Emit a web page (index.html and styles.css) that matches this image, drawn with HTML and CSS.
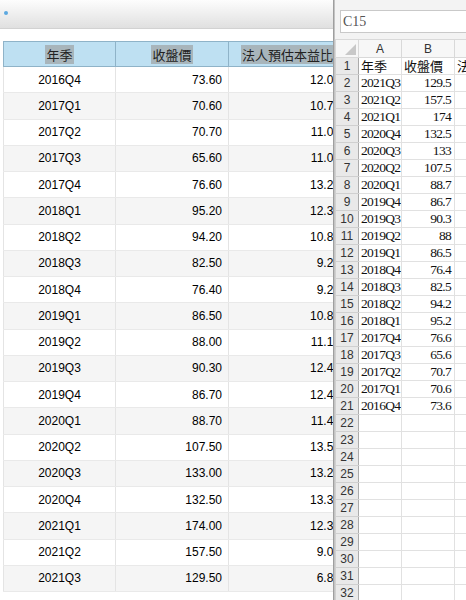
FILE: index.html
```html
<!DOCTYPE html>
<html>
<head>
<meta charset="utf-8">
<link rel="stylesheet" href="styles.css">
<title>年季 收盤價</title>
</head>
<body>
<div class="screen">
    <div class="webPane">
        <div class="topBar"><span class="dot"></span></div>
        <table class="quarterTable">
            <tr>
                <th class="colSeason"><span class="pick">年季</span></th>
                <th class="colPrice"><span class="pick">收盤價</span></th>
                <th class="colPe"><span class="pick">法人預估本益比</span></th>
            </tr>
            <tr><td>2016Q4</td><td class="num">73.60</td><td class="num">12.06</td></tr>
            <tr><td>2017Q1</td><td class="num">70.60</td><td class="num">10.71</td></tr>
            <tr><td>2017Q2</td><td class="num">70.70</td><td class="num">11.02</td></tr>
            <tr><td>2017Q3</td><td class="num">65.60</td><td class="num">11.04</td></tr>
            <tr><td>2017Q4</td><td class="num">76.60</td><td class="num">13.21</td></tr>
            <tr><td>2018Q1</td><td class="num">95.20</td><td class="num">12.33</td></tr>
            <tr><td>2018Q2</td><td class="num">94.20</td><td class="num">10.85</td></tr>
            <tr><td>2018Q3</td><td class="num">82.50</td><td class="num">9.27</td></tr>
            <tr><td>2018Q4</td><td class="num">76.40</td><td class="num">9.21</td></tr>
            <tr><td>2019Q1</td><td class="num">86.50</td><td class="num">10.88</td></tr>
            <tr><td>2019Q2</td><td class="num">88.00</td><td class="num">11.13</td></tr>
            <tr><td>2019Q3</td><td class="num">90.30</td><td class="num">12.45</td></tr>
            <tr><td>2019Q4</td><td class="num">86.70</td><td class="num">12.42</td></tr>
            <tr><td>2020Q1</td><td class="num">88.70</td><td class="num">11.46</td></tr>
            <tr><td>2020Q2</td><td class="num">107.50</td><td class="num">13.52</td></tr>
            <tr><td>2020Q3</td><td class="num">133.00</td><td class="num">13.28</td></tr>
            <tr><td>2020Q4</td><td class="num">132.50</td><td class="num">13.37</td></tr>
            <tr><td>2021Q1</td><td class="num">174.00</td><td class="num">12.36</td></tr>
            <tr><td>2021Q2</td><td class="num">157.50</td><td class="num">9.04</td></tr>
            <tr><td>2021Q3</td><td class="num">129.50</td><td class="num">6.85</td></tr>
        </table>
    </div>
    <div class="divider"></div>
    <div class="sheetPane">
        <div class="formulaBar"><div class="nameBox">C15</div></div>
        <table class="sheet">
            <tr class="colHeads">
                <td class="corner"><span class="cornerMark"></span></td>
                <td class="colA">A</td>
                <td class="colB">B</td>
                <td class="colC"></td>
            </tr>
            <tr><td class="rowHead">1</td><td class="cjk">年季</td><td class="cjk">收盤價</td><td class="cjk">法</td></tr>
            <tr><td class="rowHead">2</td><td>2021Q3</td><td class="num">129.5</td><td></td></tr>
            <tr><td class="rowHead">3</td><td>2021Q2</td><td class="num">157.5</td><td></td></tr>
            <tr><td class="rowHead">4</td><td>2021Q1</td><td class="num">174</td><td></td></tr>
            <tr><td class="rowHead">5</td><td>2020Q4</td><td class="num">132.5</td><td></td></tr>
            <tr><td class="rowHead">6</td><td>2020Q3</td><td class="num">133</td><td></td></tr>
            <tr><td class="rowHead">7</td><td>2020Q2</td><td class="num">107.5</td><td></td></tr>
            <tr><td class="rowHead">8</td><td>2020Q1</td><td class="num">88.7</td><td></td></tr>
            <tr><td class="rowHead">9</td><td>2019Q4</td><td class="num">86.7</td><td></td></tr>
            <tr><td class="rowHead">10</td><td>2019Q3</td><td class="num">90.3</td><td></td></tr>
            <tr><td class="rowHead">11</td><td>2019Q2</td><td class="num">88</td><td></td></tr>
            <tr><td class="rowHead">12</td><td>2019Q1</td><td class="num">86.5</td><td></td></tr>
            <tr><td class="rowHead">13</td><td>2018Q4</td><td class="num">76.4</td><td></td></tr>
            <tr><td class="rowHead">14</td><td>2018Q3</td><td class="num">82.5</td><td></td></tr>
            <tr><td class="rowHead">15</td><td>2018Q2</td><td class="num">94.2</td><td></td></tr>
            <tr><td class="rowHead">16</td><td>2018Q1</td><td class="num">95.2</td><td></td></tr>
            <tr><td class="rowHead">17</td><td>2017Q4</td><td class="num">76.6</td><td></td></tr>
            <tr><td class="rowHead">18</td><td>2017Q3</td><td class="num">65.6</td><td></td></tr>
            <tr><td class="rowHead">19</td><td>2017Q2</td><td class="num">70.7</td><td></td></tr>
            <tr><td class="rowHead">20</td><td>2017Q1</td><td class="num">70.6</td><td></td></tr>
            <tr><td class="rowHead">21</td><td>2016Q4</td><td class="num">73.6</td><td></td></tr>
            <tr><td class="rowHead">22</td><td></td><td></td><td></td></tr>
            <tr><td class="rowHead">23</td><td></td><td></td><td></td></tr>
            <tr><td class="rowHead">24</td><td></td><td></td><td></td></tr>
            <tr><td class="rowHead">25</td><td></td><td></td><td></td></tr>
            <tr><td class="rowHead">26</td><td></td><td></td><td></td></tr>
            <tr><td class="rowHead">27</td><td></td><td></td><td></td></tr>
            <tr><td class="rowHead">28</td><td></td><td></td><td></td></tr>
            <tr><td class="rowHead">29</td><td></td><td></td><td></td></tr>
            <tr><td class="rowHead">30</td><td></td><td></td><td></td></tr>
            <tr><td class="rowHead">31</td><td></td><td></td><td></td></tr>
            <tr><td class="rowHead">32</td><td></td><td></td><td></td></tr>
        </table>
    </div>
</div>
</body>
</html>
```

FILE: styles.css
```css
html, body {margin: 0;
            padding: 0;
            background: white}
.screen {display: flex;
         width: 466px;
         height: 600px;
         overflow: hidden}

/* left: the web page table */
.webPane {width: 333px;
          flex: none;
          overflow: hidden;
          font-family: "Liberation Sans", Arial, "Noto Sans CJK TC", sans-serif;
          font-size: 12px}
.topBar {height: 28px;
         background: linear-gradient(#fdfdfd, #e0e0e0);
         border-bottom: 1px solid #d2d2d2;
         position: relative}
.dot {position: absolute;
      left: 4px;
      top: 11px;
      width: 4px;
      height: 4px;
      border-radius: 2px;
      background: #5ca8e0}
.quarterTable {border-collapse: collapse;
               margin: 12px 0 0 3px;
               table-layout: fixed;
               width: 343px}
.quarterTable th {height: 24px;
                  padding: 0;
                  background: #bee0f2;
                  border: 1px solid #8fb3c8;
                  font-family: "Noto Sans CJK TC", sans-serif;
                  font-weight: normal;
                  font-size: 13px;
                  color: #222;
                  text-align: center}
.pick {background: #a8b5bb;
       padding: 0 1px}
.colSeason {width: 111px}
.colPrice {width: 112px}
.colPe {width: 117px}
.quarterTable td {height: 25.25px;
                  padding: 0 6px;
                  border-right: 1px solid #e4e4e4;
                  border-bottom: 1px solid #e9e9e9;
                  border-left: 1px solid #e4e4e4;
                  text-align: center;
                  color: #000}
.quarterTable tr:nth-child(odd) td {background: #f5f5f5}
.quarterTable td.num {text-align: right}

.divider {width: 2px;
          flex: none;
          background: linear-gradient(to right, #8c8c8c, #d6d6d6)}

/* right: the spreadsheet */
.sheetPane {flex: 1;
            background: #f3f3f3;
            overflow: hidden}
.formulaBar {padding: 10px 0 6px 5px}
.nameBox {height: 21px;
          background: white;
          border: 1px solid #c9c9c9;
          border-right: none;
          font-family: "Liberation Serif", serif;
          font-size: 14px;
          line-height: 21px;
          padding-left: 2px;
          color: #555}
.sheet {border-collapse: collapse;
        table-layout: fixed;
        width: 140px;
        background: white;
        font-family: "Liberation Serif", "Noto Sans CJK TC", serif;
        font-size: 13.5px;
        letter-spacing: -0.7px}
.sheet td {height: 16px;
           padding: 0 2px;
           border: 1px solid #e1e1e1;
           white-space: nowrap;
           overflow: hidden;
           line-height: 16px;
           color: #111}
.sheet td.num {text-align: right;
               padding-right: 3px}
.sheet td.cjk {font-family: "Noto Sans CJK TC", sans-serif;
               font-size: 13px;
               letter-spacing: 0}
.colHeads td {height: 17px;
              background: #f7f7f7;
              border-color: #d9d9d9;
              font-family: "Liberation Sans", Arial, sans-serif;
              font-size: 12px;
              letter-spacing: 0;
              text-align: center;
              color: #333}
.corner {width: 18px;
         position: relative}
.cornerMark {position: absolute;
             right: 2px;
             bottom: 2px;
             border-left: 11px solid transparent;
             border-bottom: 11px solid #c8c8c8}
.colA {width: 38px}
.colB {width: 48px}
.colC {width: 20px}
.sheet td.rowHead {background: #e9e9e9;
                   border-color: #d0d0d0;
                   border-right-color: #ababab;
                   font-family: "Liberation Sans", Arial, sans-serif;
                   font-size: 12px;
                   letter-spacing: 0;
                   text-align: center;
                   color: #333}
```
